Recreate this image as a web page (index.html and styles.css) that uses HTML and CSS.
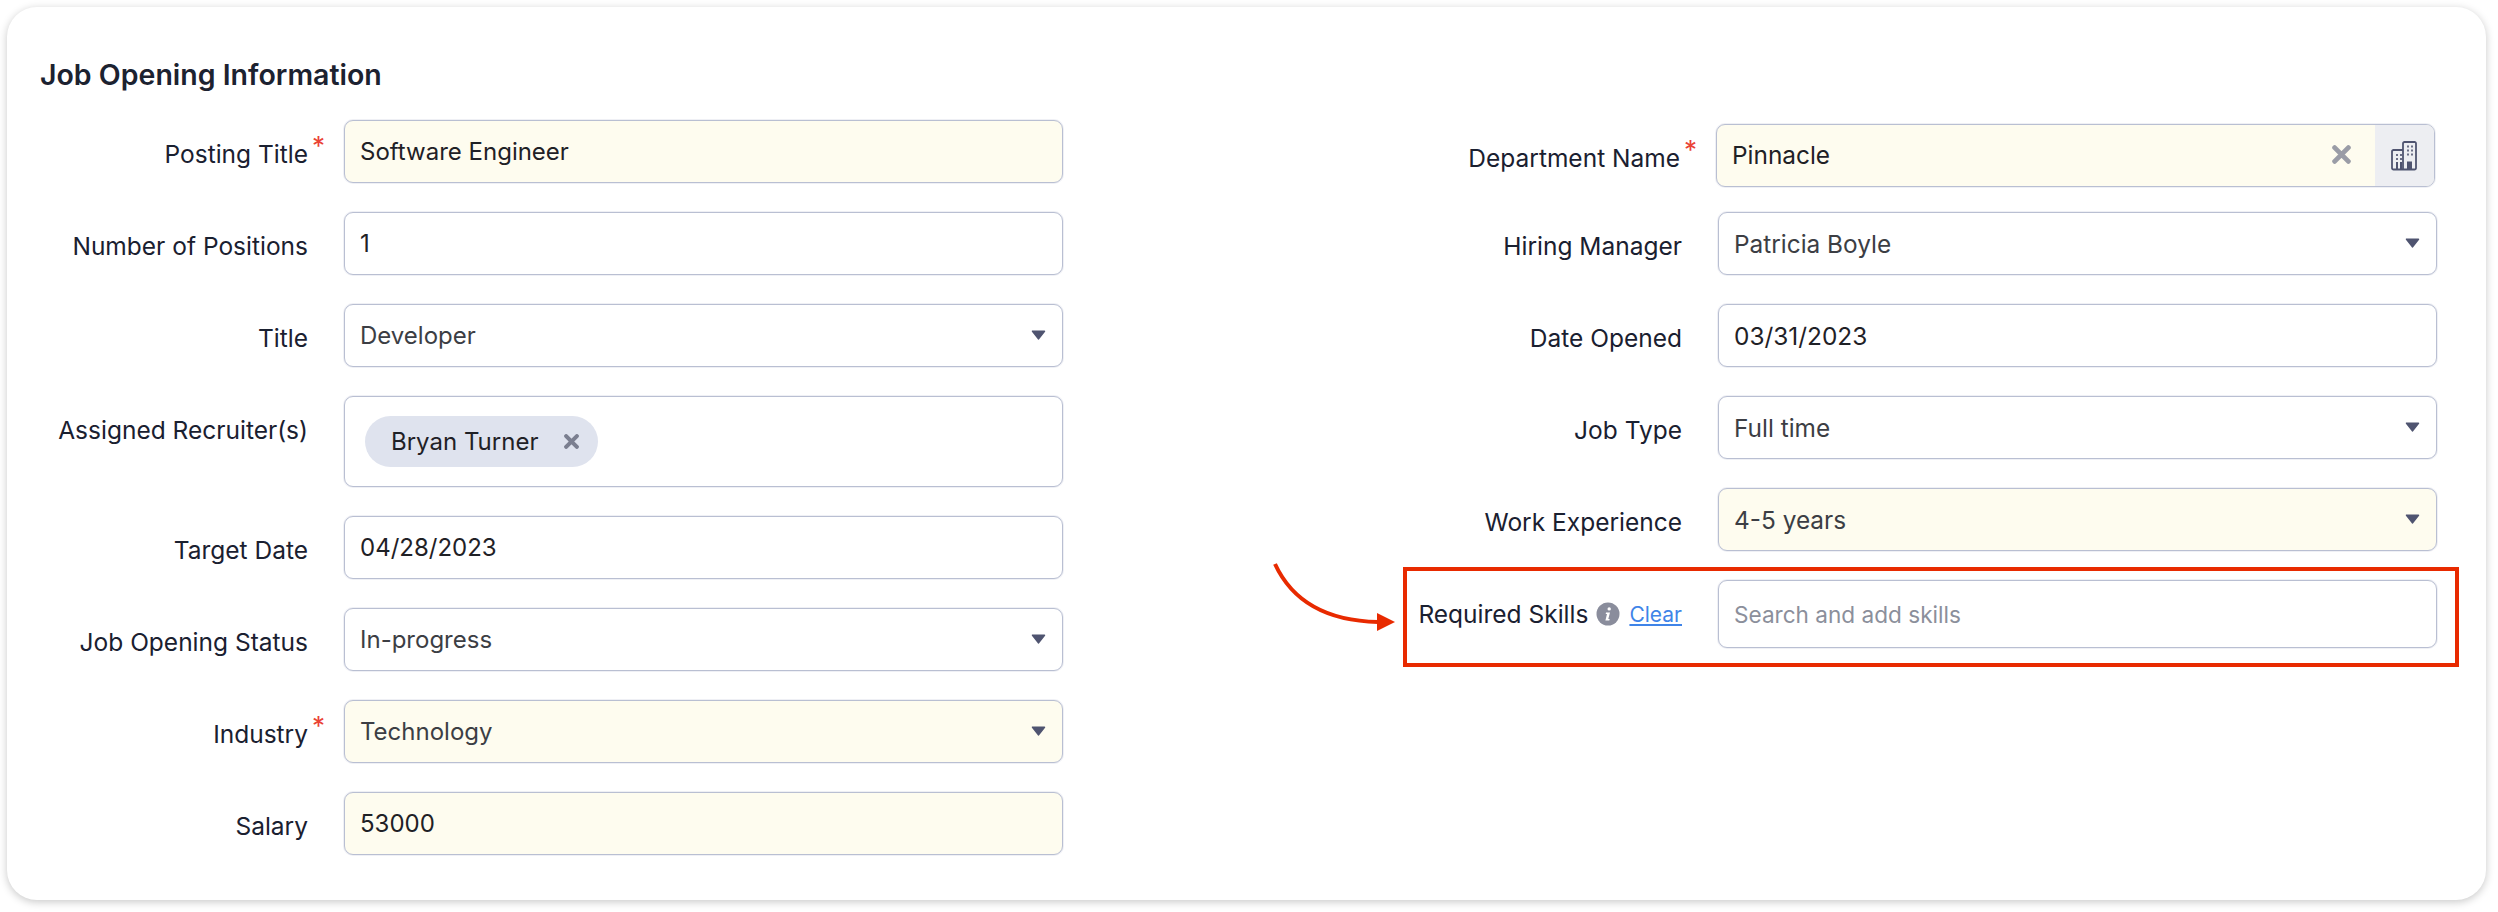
FILE: index.html
```html
<!DOCTYPE html>
<html lang="en">
<head>
<meta charset="utf-8">
<title>Job Opening Information</title>
<link rel="stylesheet" href="styles.css">
</head>
<body>
<main class="card">
  <h2 class="card-title">Job Opening Information</h2>
  <div class="columns">
    <section class="column">
      <div class="row"><label class="label req">Posting Title<span class="star">*</span></label><div class="field mandatory">Software Engineer</div></div>
      <div class="row"><label class="label">Number of Positions</label><div class="field">1</div></div>
      <div class="row"><label class="label">Title</label><div class="field select"><span>Developer</span><svg class="caret" viewBox="0 0 14 9"><path d="M1.5 1h11L7 8z" fill="#4f5470" stroke="#4f5470" stroke-width="1.6" stroke-linejoin="round"/></svg></div></div>
      <div class="row row-tall"><label class="label label-top">Assigned Recruiter(s)</label><div class="field field-tall"><span class="chip"><span>Bryan Turner</span><svg class="chip-x" viewBox="0 0 14 14"><path d="M2 2l10 10M12 2L2 12" stroke="#7b7f90" stroke-width="3.8" stroke-linecap="round"/></svg></span></div></div>
      <div class="row"><label class="label">Target Date</label><div class="field">04/28/2023</div></div>
      <div class="row"><label class="label">Job Opening Status</label><div class="field select"><span>In-progress</span><svg class="caret" viewBox="0 0 14 9"><path d="M1.5 1h11L7 8z" fill="#4f5470" stroke="#4f5470" stroke-width="1.6" stroke-linejoin="round"/></svg></div></div>
      <div class="row"><label class="label req">Industry<span class="star">*</span></label><div class="field select mandatory"><span>Technology</span><svg class="caret" viewBox="0 0 14 9"><path d="M1.5 1h11L7 8z" fill="#4f5470" stroke="#4f5470" stroke-width="1.6" stroke-linejoin="round"/></svg></div></div>
      <div class="row"><label class="label">Salary</label><div class="field mandatory">53000</div></div>
    </section>
    <section class="column column-right">
      <div class="row row-dept"><label class="label req">Department Name<span class="star">*</span></label>
        <div class="field mandatory field-lookup"><span class="lookup-value">Pinnacle</span>
          <svg class="lookup-x" viewBox="0 0 18 18"><path d="M2.5 2.5l13 13M15.5 2.5l-13 13" stroke="#9a9ca6" stroke-width="4.6" stroke-linecap="round"/></svg>
          <span class="addon"><svg class="building" viewBox="0 0 27 30" fill="none"><path d="M12 28.5V2.5a1.5 1.5 0 0 1 1.5-1.5h10A1.5 1.5 0 0 1 25 2.5V27a1.5 1.5 0 0 1-1.5 1.5H2.5A1.5 1.5 0 0 1 1 27V10.5A1.5 1.5 0 0 1 2.5 9H12" stroke="#4f5470" stroke-width="1.8"/><path d="M16 20.5h5V28h-5z" fill="#4f5470"/><path d="M5 21h2v7H5zM9 21h2v7H9z" fill="#4f5470"/><path d="M16 4.5h2v2h-2zM20 4.5h2v2h-2zM16 8.500h2v2h-2zM20 8.500h2v2h-2zM16 12.500h2v2h-2zM20 12.500h2v2h-2zM5 13h2v2H5zM9 13h2v2H9zM5 17h2v2H5zM9 17h2v2H9z" fill="#6b6f86"/></svg></span>
        </div></div>
      <div class="row"><label class="label">Hiring Manager</label><div class="field select"><span>Patricia Boyle</span><svg class="caret" viewBox="0 0 14 9"><path d="M1.5 1h11L7 8z" fill="#4f5470" stroke="#4f5470" stroke-width="1.6" stroke-linejoin="round"/></svg></div></div>
      <div class="row"><label class="label">Date Opened</label><div class="field">03/31/2023</div></div>
      <div class="row"><label class="label">Job Type</label><div class="field select"><span>Full time</span><svg class="caret" viewBox="0 0 14 9"><path d="M1.5 1h11L7 8z" fill="#4f5470" stroke="#4f5470" stroke-width="1.6" stroke-linejoin="round"/></svg></div></div>
      <div class="row"><label class="label">Work Experience</label><div class="field select mandatory"><span>4-5 years</span><svg class="caret" viewBox="0 0 14 9"><path d="M1.5 1h11L7 8z" fill="#4f5470" stroke="#4f5470" stroke-width="1.6" stroke-linejoin="round"/></svg></div></div>
      <div class="row row-skills">
        <div class="label label-skills"><span>Required Skills</span><svg class="info" viewBox="0 0 24 24"><circle cx="12" cy="12" r="11.500" fill="#8a8d9c"/><path d="M13.200 5.200a1.700 1.700 0 1 1 0 3.400 1.700 1.700 0 0 1 0-3.400zM10 10.500h4l-1.700 6.500h1.400l-.4 1.600H9.400l1.600-6.500H9.700z" fill="#fff"/></svg><a class="clear" href="#">Clear</a></div>
        <div class="field field-skills">Search and add skills</div>
      </div>
    </section>
  </div>
  <div class="callout"></div>
  <svg class="arrow" viewBox="0 0 130 70" fill="none"><path d="M3 2C22 43 60 59 106 60" stroke="#e82a00" stroke-width="4"/><path d="M105 51l18 9-18 9z" fill="#e82a00"/></svg>
</main>
</body>
</html>
```
FILE: styles.css
```css
* { box-sizing: border-box; }
html, body { margin: 0; background: #fff; }
body { min-height: 912px; padding: 7px 0 0 7px; font-family: Inter, "Liberation Sans", sans-serif; color: #1a2030; }
.card {
  position: relative;
  width: 2479px;
  height: 893px;
  padding: 52px 49px 0 33px;
  background: #fff;
  border-radius: 30px;
  box-shadow: 0 2px 8px rgba(0, 0, 0, .22);
}
.card-title { margin: 0 0 29px; font-size: 28.500px; line-height: 32px; font-weight: 600; color: #1c2230; }
.columns { display: flex; justify-content: space-between; align-items: flex-start; }
.column { display: flex; flex-direction: column; gap: 29px; width: 1023px; }
.column-right { width: 1055px; }
.row { display: flex; align-items: center; gap: 36px; height: 63px; }
.row-tall { height: 91px; }
.row-dept { margin: 4px 0 -4px; position: relative; left: -2px; }
.row-skills { height: 68px; }
.label { flex: 1; min-width: 0; position: relative; padding-top: 6px; text-align: right; font-size: 24.500px; line-height: 29px; white-space: nowrap; }
.label-top { align-self: flex-start; padding-top: 20px; }
.star { position: absolute; left: calc(100% + 4px); top: -3px; font-size: 26px; line-height: 29px; color: #ea4335; }
.field {
  flex: none;
  display: flex;
  align-items: center;
  width: 719px;
  height: 100%;
  padding: 0 15px;
  background: #fff;
  border: 1px solid #b9bfd2;
  border-radius: 9px;
  box-shadow: 0 0 0 1px rgba(191, 196, 214, .25);
  font-size: 24px;
  color: #1f2126;
}
.column-right .field { font-size: 24.400px; }
.mandatory { background: #fefcef; }
.select { justify-content: space-between; color: #3c3e44; padding-right: 16px; }
.caret { width: 15px; height: 10px; flex: none; margin-bottom: 2px; }
.field-tall { padding: 0 0 0 20px; }
.chip { display: flex; align-items: center; justify-content: space-between; width: 233px; height: 51px; padding: 0 19px 0 26px; border-radius: 26px; background: #dfe3ee; }
.chip-x { width: 15px; height: 15px; }
.field-lookup { padding-right: 0; padding-bottom: 2px; overflow: hidden; }
.lookup-value { flex: 1; }
.lookup-x { width: 19px; height: 19px; margin-right: 24px; }
.addon { display: flex; align-items: center; justify-content: center; width: 59px; height: calc(100% + 2px); margin-bottom: -2px; background: #edeef2; }
.building { width: 27px; height: 30px; }
.label-skills { display: flex; justify-content: flex-end; align-items: center; padding-top: 0; }
.info { width: 24px; height: 24px; margin: 0 9px 0 8px; flex: none; }
.clear { font-size: 21px; color: #3f84e8; }
.column-right .field-skills { color: #8b8f9b; font-size: 22.600px; }
.callout { position: absolute; left: 1396px; top: 560px; width: 1056px; height: 100px; border: 4px solid #e82a00; }
.arrow { position: absolute; left: 1265px; top: 555px; width: 130px; height: 70px; }
```
